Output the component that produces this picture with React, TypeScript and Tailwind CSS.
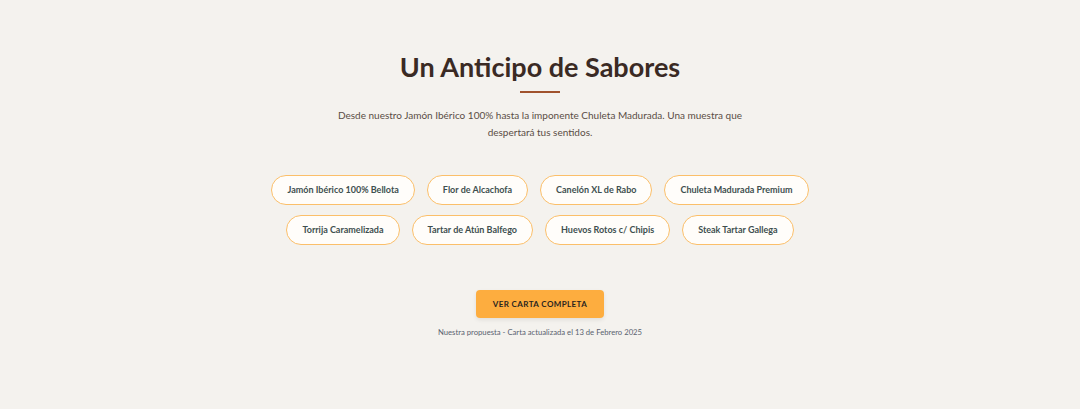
import React from "react";

const row1 = ["Jamón Ibérico 100% Bellota", "Flor de Alcachofa", "Canelón XL de Rabo", "Chuleta Madurada Premium"];
const row2 = ["Torrija Caramelizada", "Tartar de Atún Balfego", "Huevos Rotos c/ Chipis", "Steak Tartar Gallega"];

function Pill({ label }: { label: string }) {
  return (
    <span className="inline-flex h-[30px] items-center rounded-full border border-[#fbbf6a] bg-[#fffdfa] px-[15px] text-[9px] font-bold text-[#3e4f4f]">
      {label}
    </span>
  );
}

export default function App() {
  return (
    <div className="flex min-h-[409px] w-full flex-col items-center bg-[#f4f2ee] pt-[49px] font-['Lato','Open_Sans',sans-serif]">
      <h2 className="text-[27px] font-bold leading-[36px] text-[#3a2a24]">Un Anticipo de Sabores</h2>
      <div className="mt-[6px] h-[2px] w-[40px] bg-[#a0522d]" />
      <p className="mt-[14px] w-[410px] text-center text-[10px] leading-[17px] text-[#5a4d45]">
        Desde nuestro Jamón Ibérico 100% hasta la imponente Chuleta Madurada. Una muestra que despertará tus sentidos.
      </p>
      <div className="mt-[34px] flex flex-col items-center gap-[10px]">
        <div className="flex gap-[12px]">
          {row1.map((l) => (
            <Pill key={l} label={l} />
          ))}
        </div>
        <div className="flex gap-[12px]">
          {row2.map((l) => (
            <Pill key={l} label={l} />
          ))}
        </div>
      </div>
      <button className="mt-[45px] h-[28px] rounded-[4px] bg-[#fdad3f] px-[17px] text-[8px] font-bold tracking-[0.05em] text-[#2a2420] shadow-[0_2px_4px_rgba(0,0,0,0.08)]">
        VER CARTA COMPLETA
      </button>
      <p className="mt-[9px] text-[7.7px] text-[#5a6270]">Nuestra propuesta - Carta actualizada el 13 de Febrero 2025</p>
    </div>
  );
}
